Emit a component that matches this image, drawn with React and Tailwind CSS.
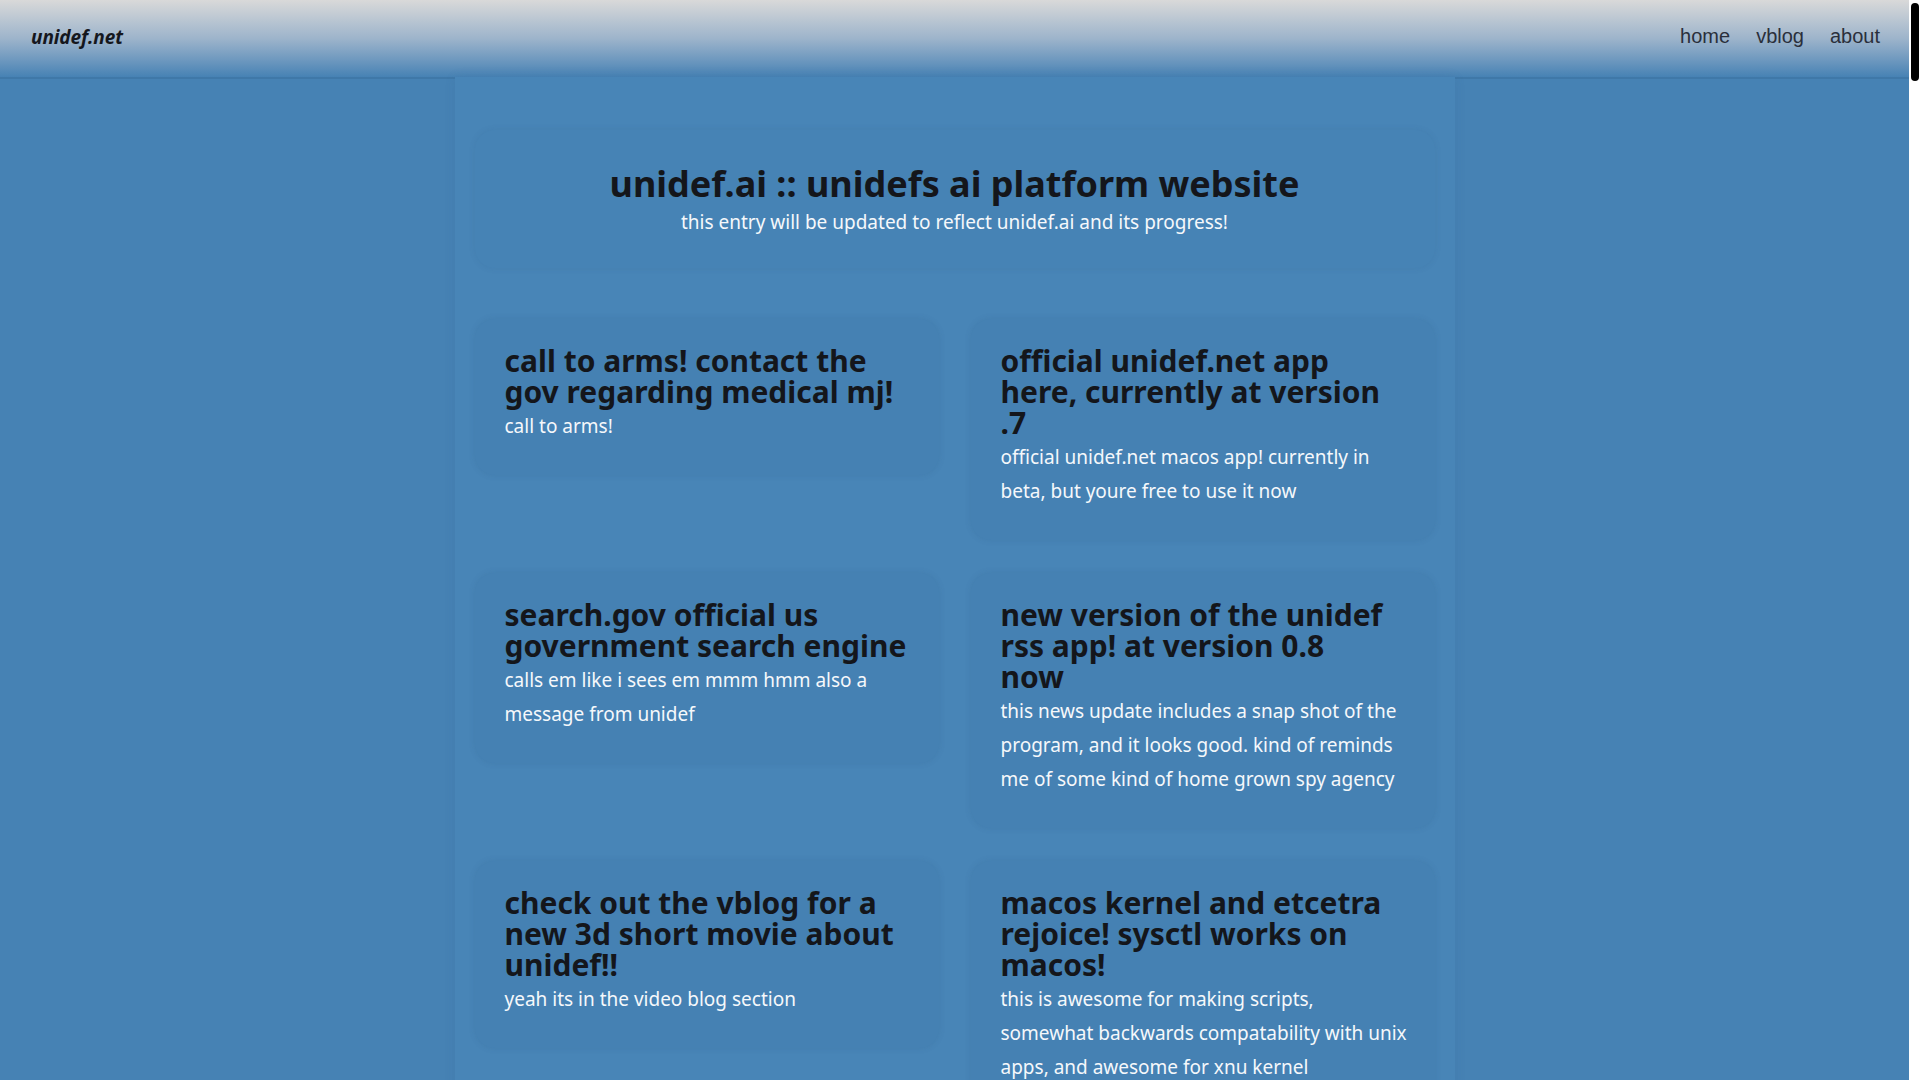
import React from "react";

const cards = [
  {
    title: ["call to arms! contact the", "gov regarding medical mj!"],
    body: "call to arms!",
  },
  {
    title: ["official unidef.net app", "here, currently at version", ".7"],
    body: "official unidef.net macos app! currently in beta, but youre free to use it now",
  },
  {
    title: ["search.gov official us", "government search engine"],
    body: "calls em like i sees em mmm hmm also a message from unidef",
  },
  {
    title: ["new version of the unidef", "rss app! at version 0.8", "now"],
    body: "this news update includes a snap shot of the program, and it looks good. kind of reminds me of some kind of home grown spy agency",
  },
  {
    title: ["check out the vblog for a", "new 3d short movie about", "unidef!!"],
    body: "yeah its in the video blog section",
  },
  {
    title: ["macos kernel and etcetra", "rejoice! sysctl works on", "macos!"],
    body: "this is awesome for making scripts, somewhat backwards compatability with unix apps, and awesome for xnu kernel",
  },
];

function Card({ title, body }) {
  return (
    <div className="rounded-[20px] bg-[#4581b3] pt-[26px] pb-[32px] pl-[30px] pr-[24px] shadow-[0_0_6px_rgba(40,80,120,0.15)]">
      <h2 className="font-['Noto_Sans',sans-serif] font-bold text-[30px] leading-[31px] text-[#14161b]">
        {title.map((line, i) => (
          <span key={i} className="block">
            {line}
          </span>
        ))}
      </h2>
      <p className="mt-[2px] font-['Noto_Sans',sans-serif] text-[19px] leading-[34px] text-[#f5f8fb]">
        {body}
      </p>
    </div>
  );
}

export default function App() {
  return (
    <div className="flex h-screen w-full overflow-hidden bg-[#4682b4]">
      <div className="flex-1 flex flex-col overflow-hidden">
        <header className="h-[79px] shrink-0 flex items-center justify-between pl-[31px] pr-[29px] bg-gradient-to-b from-[#d9d9d9] via-[#9db4cb] to-[#4682b4] border-b-2 border-[#3f78a8]">
          <div className="font-['Noto_Sans',sans-serif] font-bold italic text-[19px] text-[#15171d] tracking-[-0.1px] pb-[2px]">
            unidef.net
          </div>
          <nav className="flex items-center gap-[26px] font-['Liberation_Sans',sans-serif] text-[20px] text-[#2a2f3b] pb-[6px]">
            <a href="#">home</a>
            <a href="#">vblog</a>
            <a href="#">about</a>
          </nav>
        </header>
        <main className="relative -mt-[2px] mx-auto w-[1000px] flex-1 bg-[#4885b7] px-[20px] pt-[53px] shadow-[0_0_10px_rgba(50,90,130,0.12)]">
          <section className="rounded-[20px] bg-[#4683b5] pt-[30px] pb-[32px] text-center shadow-[0_0_6px_rgba(40,80,120,0.12)]">
            <h1 className="font-['Noto_Sans',sans-serif] font-bold text-[36px] leading-[48px] text-[#14161b]">
              unidef.ai :: unidefs ai platform website
            </h1>
            <p className="font-['Noto_Sans',sans-serif] text-[19px] leading-[28px] text-[#f5f8fb]">
              this entry will be updated to reflect unidef.ai and its progress!
            </p>
          </section>
          <div className="mt-[51px] grid grid-cols-2 items-start gap-x-[32px] gap-y-[33px]">
            {cards.map((c, i) => (
              <Card key={i} {...c} />
            ))}
          </div>
        </main>
      </div>
      <div className="w-[11px] shrink-0 bg-white pt-[3px] pl-[2px]">
        <div className="h-[78px] w-[8px] rounded-full bg-black" />
      </div>
    </div>
  );
}
